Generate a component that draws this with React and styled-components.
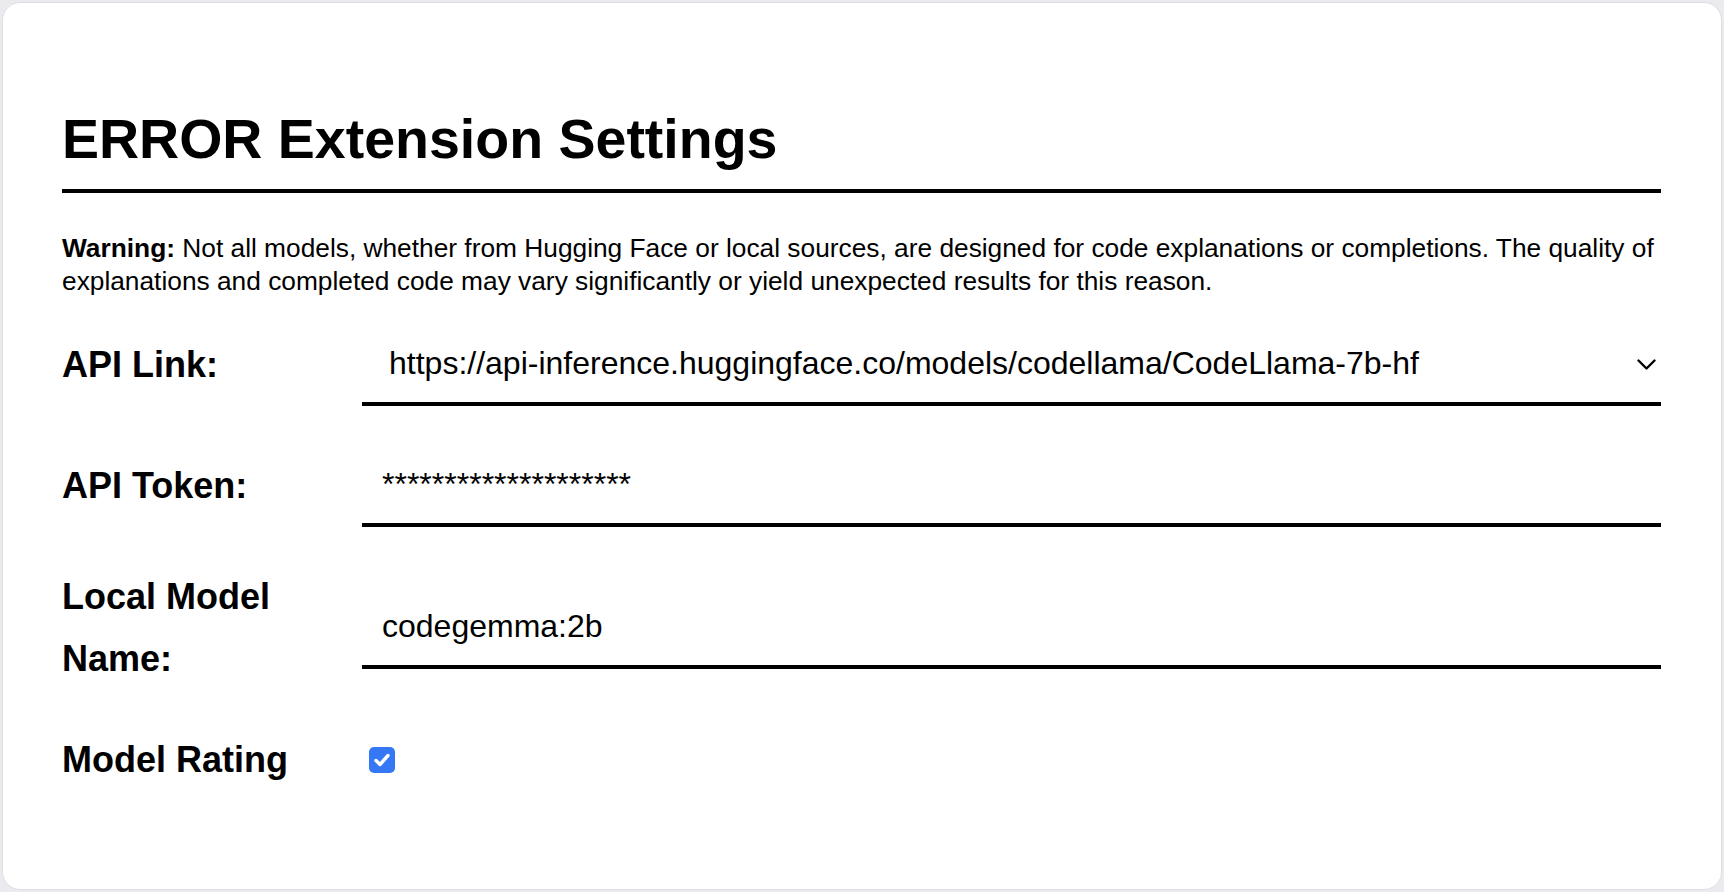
import React, { useState } from 'react';
import styled, { createGlobalStyle } from 'styled-components';

const GlobalStyle = createGlobalStyle`
	*, *::before, *::after {
		box-sizing: border-box;
	}
	html, body {
		margin: 0;
		padding: 0;
		background: #ebebef;
	}
	body {
		font-family: 'Liberation Sans', Arial, Helvetica, sans-serif;
		color: #000;
	}
`;

const Page = styled.div`
	height: 100vh;
	padding: 2px;
`;

const Card = styled.div`
	height: 100%;
	background: #fff;
	border: 1px solid #dedee3;
	border-radius: 18px;
	padding: 104px 60px 0 59px;
`;

const Title = styled.h1`
	margin: 0;
	font-size: 55.5px;
	line-height: 64px;
	font-weight: 700;
`;

const Rule = styled.hr`
	margin: 18px 0 0;
	border: none;
	height: 4px;
	background: #000;
`;

const Warning = styled.p`
	margin: 39px 0 0;
	font-size: 26.3px;
	line-height: 33px;

	& strong {
		font-weight: 700;
	}
`;

const Form = styled.form`
	display: flex;
	flex-direction: column;
	gap: 39px;
	margin-top: 26px;
`;

const Row = styled.div`
	display: flex;
	align-items: center;
`;

const Label = styled.label`
	flex: 0 0 300px;
	font-size: 36px;
	line-height: 62px;
	font-weight: 700;
`;

const Field = styled.div`
	position: relative;
	flex: 1;
`;

const TextInput = styled.input`
	display: block;
	width: 100%;
	height: 82px;
	padding: 20px;
	border: none;
	border-bottom: 4px solid #000;
	outline: none;
	background: transparent;
	font-family: inherit;
	font-size: 32px;
	color: #000;
`;

const Select = styled.select`
	display: block;
	width: 100%;
	height: 82px;
	padding: 20px 60px 20px 27px;
	border: none;
	border-bottom: 4px solid #000;
	border-radius: 0;
	outline: none;
	background: transparent;
	appearance: none;
	font-family: inherit;
	font-size: 32px;
	color: #000;
`;

const Chevron = styled.svg`
	position: absolute;
	right: 5px;
	top: 35px;
	width: 19px;
	height: 11px;
	pointer-events: none;
`;

const CheckWrap = styled.label`
	display: flex;
	align-items: center;
	padding-left: 7px;
	cursor: pointer;
`;

const HiddenCheck = styled.input`
	position: absolute;
	opacity: 0;
	width: 0;
	height: 0;
`;

const CheckBox = styled.span`
	display: grid;
	place-items: center;
	width: 26px;
	height: 26px;
	border-radius: 5px;
	background: ${({ checked }) => (checked ? '#3478f6' : '#fff')};
	border: ${({ checked }) => (checked ? 'none' : '2px solid #767676')};
`;

const apiLinks = [
	'https://api-inference.huggingface.co/models/codellama/CodeLlama-7b-hf',
	'https://api-inference.huggingface.co/models/bigcode/starcoder',
	'http://localhost:11434/api/generate',
];

const App = () => {
	const [apiLink, setApiLink] = useState(apiLinks[0]);
	const [token, setToken] = useState('********************');
	const [localModel, setLocalModel] = useState('codegemma:2b');
	const [rating, setRating] = useState(true);

	return (
		<Page>
			<GlobalStyle />
			<Card>
				<Title>ERROR Extension Settings</Title>
				<Rule />
				<Warning>
					<strong>Warning:</strong> Not all models, whether from Hugging Face or local
					sources, are designed for code explanations or completions. The quality of
					explanations and completed code may vary significantly or yield unexpected
					results for this reason.
				</Warning>

				<Form onSubmit={(e) => e.preventDefault()}>
					<Row>
						<Label htmlFor="api-link">API Link:</Label>
						<Field>
							<Select
								id="api-link"
								value={apiLink}
								onChange={(e) => setApiLink(e.target.value)}
							>
								{apiLinks.map((link) => (
									<option key={link} value={link}>
										{link}
									</option>
								))}
							</Select>
							<Chevron viewBox="0 0 19 11" fill="none">
								<path
									d="M1.5 1.5 L9.5 9.5 L17.5 1.5"
									stroke="#000"
									strokeWidth="2.4"
									strokeLinecap="round"
									strokeLinejoin="round"
								/>
							</Chevron>
						</Field>
					</Row>

					<Row>
						<Label htmlFor="api-token">API Token:</Label>
						<Field>
							<TextInput
								id="api-token"
								type="text"
								value={token}
								onChange={(e) => setToken(e.target.value)}
							/>
						</Field>
					</Row>

					<Row>
						<Label htmlFor="local-model">Local Model Name:</Label>
						<Field>
							<TextInput
								id="local-model"
								type="text"
								value={localModel}
								onChange={(e) => setLocalModel(e.target.value)}
							/>
						</Field>
					</Row>

					<Row>
						<Label htmlFor="model-rating">Model Rating</Label>
						<CheckWrap>
							<HiddenCheck
								id="model-rating"
								type="checkbox"
								checked={rating}
								onChange={(e) => setRating(e.target.checked)}
							/>
							<CheckBox checked={rating}>
								{rating && (
									<svg width="20" height="20" viewBox="0 0 20 20" fill="none">
										<path
											d="M4 10.5 L8 14.5 L16 5.5"
											stroke="#fff"
											strokeWidth="3.4"
											strokeLinecap="round"
											strokeLinejoin="round"
										/>
									</svg>
								)}
							</CheckBox>
						</CheckWrap>
					</Row>
				</Form>
			</Card>
		</Page>
	);
};

export default App;
